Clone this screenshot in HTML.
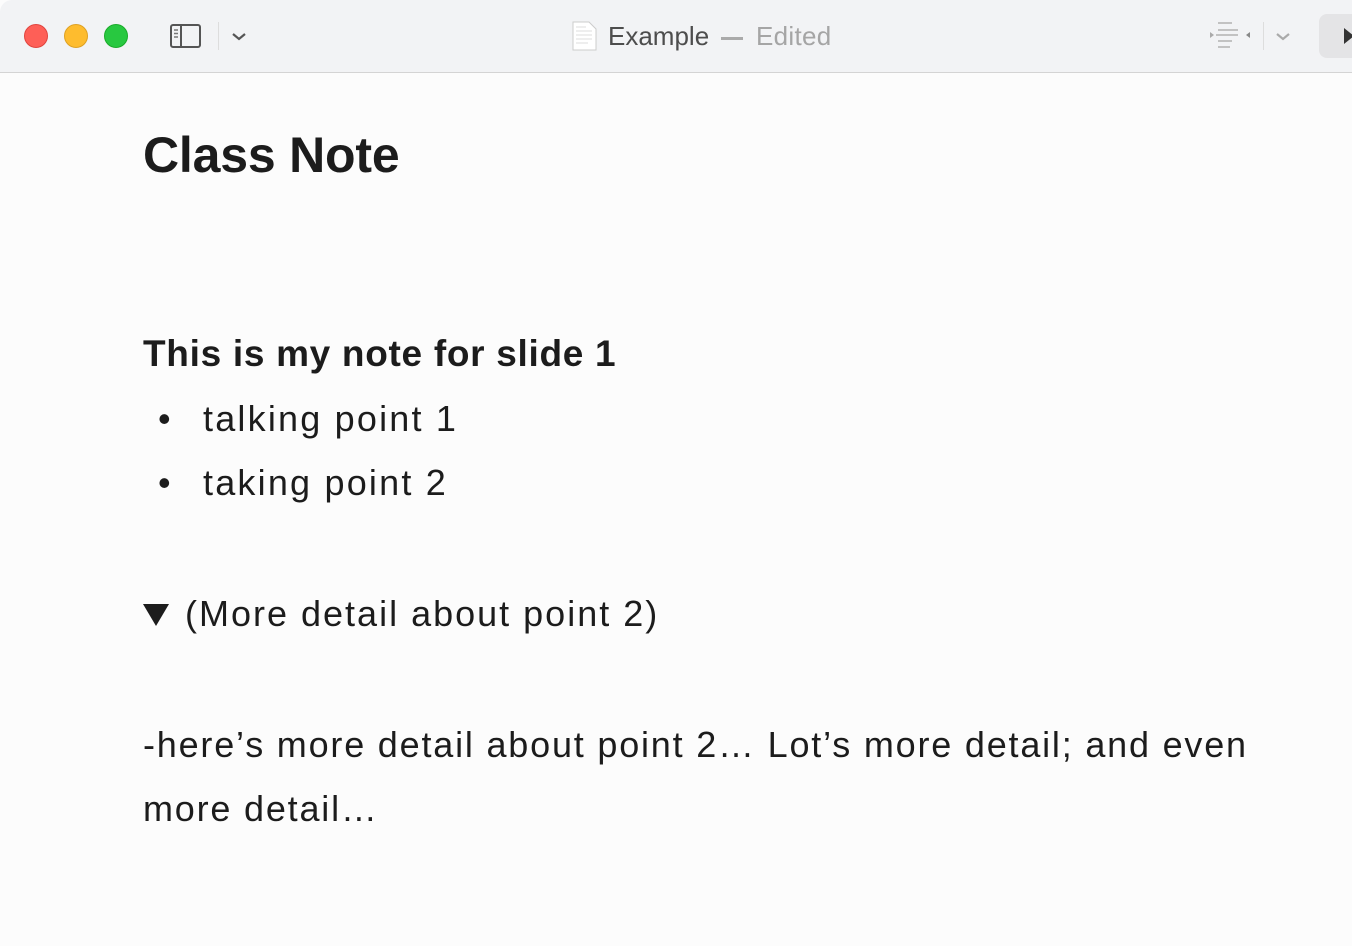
<!DOCTYPE html>
<html><head><style>
body{margin:0;width:1352px;height:946px;background:#fcfcfc;font-family:"Liberation Sans",sans-serif;color:#1c1c1c;overflow:hidden;position:relative}
.bar{position:absolute;left:0;top:0;width:1352px;height:72px;background:#f2f3f5;border-bottom:1px solid #d4d4d4;border-top-left-radius:12px}
.dot{position:absolute;top:24px;width:24px;height:24px;border-radius:50%}
.t{position:absolute;white-space:nowrap}
.b{font-size:36px;letter-spacing:2px}
</style></head><body>
<div class="bar">
<div class="dot" style="left:24px;background:#fe5f57;border:1px solid #e0443e;box-sizing:border-box"></div>
<div class="dot" style="left:64px;background:#febc2e;border:1px solid #dea123;box-sizing:border-box"></div>
<div class="dot" style="left:104px;background:#28c840;border:1px solid #1aab29;box-sizing:border-box"></div>
<svg style="position:absolute;left:170px;top:24px" width="32" height="24"><rect x="1" y="1" width="29" height="22" rx="2" fill="none" stroke="#555" stroke-width="2"/><line x1="11" y1="1" x2="11" y2="23" stroke="#555" stroke-width="2"/><path d="M4 6h4M4 9.5h4M4 13h4" stroke="#777" stroke-width="1.5"/></svg>
<div style="position:absolute;left:218px;top:22px;width:1px;height:28px;background:#ddd"></div>
<svg style="position:absolute;left:231px;top:31px" width="16" height="12"><path d="M2 3l6 5 6-5" fill="none" stroke="#555" stroke-width="2.2"/></svg>
<svg style="position:absolute;left:572px;top:21px" width="26" height="30"><path d="M1 1h16l7 7v21H1z" fill="#fff" stroke="#ccc"/><path d="M4 6h10M4 10h16M4 14h16M4 18h16M4 22h12" stroke="#ddd" stroke-width="1"/></svg>
<div class="t" style="left:608px;top:21px;font-size:26px;color:#4d4d4d">Example</div>
<div style="position:absolute;left:721px;top:37px;width:22px;height:3px;background:#aaa"></div>
<div class="t" style="left:756px;top:21px;font-size:26px;color:#a5a5a5;letter-spacing:0.3px">Edited</div>
<svg style="position:absolute;left:1208px;top:20px" width="44" height="30"><path d="M10 3h14M10 10h20M8 15h22M10 21h14M10 27h12" stroke="#c2c2c2" stroke-width="2"/><path d="M2 12l4 3-4 3z" fill="#aaa"/><path d="M42 12l-4 3 4 3z" fill="#888"/></svg>
<div style="position:absolute;left:1263px;top:22px;width:1px;height:28px;background:#ddd"></div>
<svg style="position:absolute;left:1275px;top:31px" width="16" height="12"><path d="M2 3l6 5 6-5" fill="none" stroke="#aaa" stroke-width="2.2"/></svg>
<div style="position:absolute;left:1319px;top:14px;width:60px;height:44px;border-radius:8px;background:#e4e4e6"></div>
<svg style="position:absolute;left:1344px;top:28px" width="10" height="16"><path d="M0 0l10 8-10 8z" fill="#333"/></svg>
</div>
<div class="t" style="left:143px;top:126px;font-size:50px;font-weight:bold;letter-spacing:-0.2px">Class Note</div>
<div class="t" style="left:143px;top:333px;font-size:37px;font-weight:bold;letter-spacing:0.7px">This is my note for slide 1</div>
<div class="t" style="left:158px;top:398px;font-size:36px">•</div>
<div class="t b" style="left:203px;top:398px;letter-spacing:2.2px">talking point 1</div>
<div class="t" style="left:158px;top:462px;font-size:36px">•</div>
<div class="t b" style="left:203px;top:462px;letter-spacing:2.2px">taking point 2</div>
<svg style="position:absolute;left:143px;top:604px" width="26" height="22"><path d="M0 0h26L13 22z" fill="#1c1c1c"/></svg>
<div class="t b" style="left:185px;top:593px">(More detail about point 2)</div>
<div class="t b" style="left:143px;top:724px;letter-spacing:1.8px">-here’s more detail about point 2… Lot’s more detail; and even</div>
<div class="t b" style="left:143px;top:788px;letter-spacing:1.8px">more detail…</div>
</body></html>
